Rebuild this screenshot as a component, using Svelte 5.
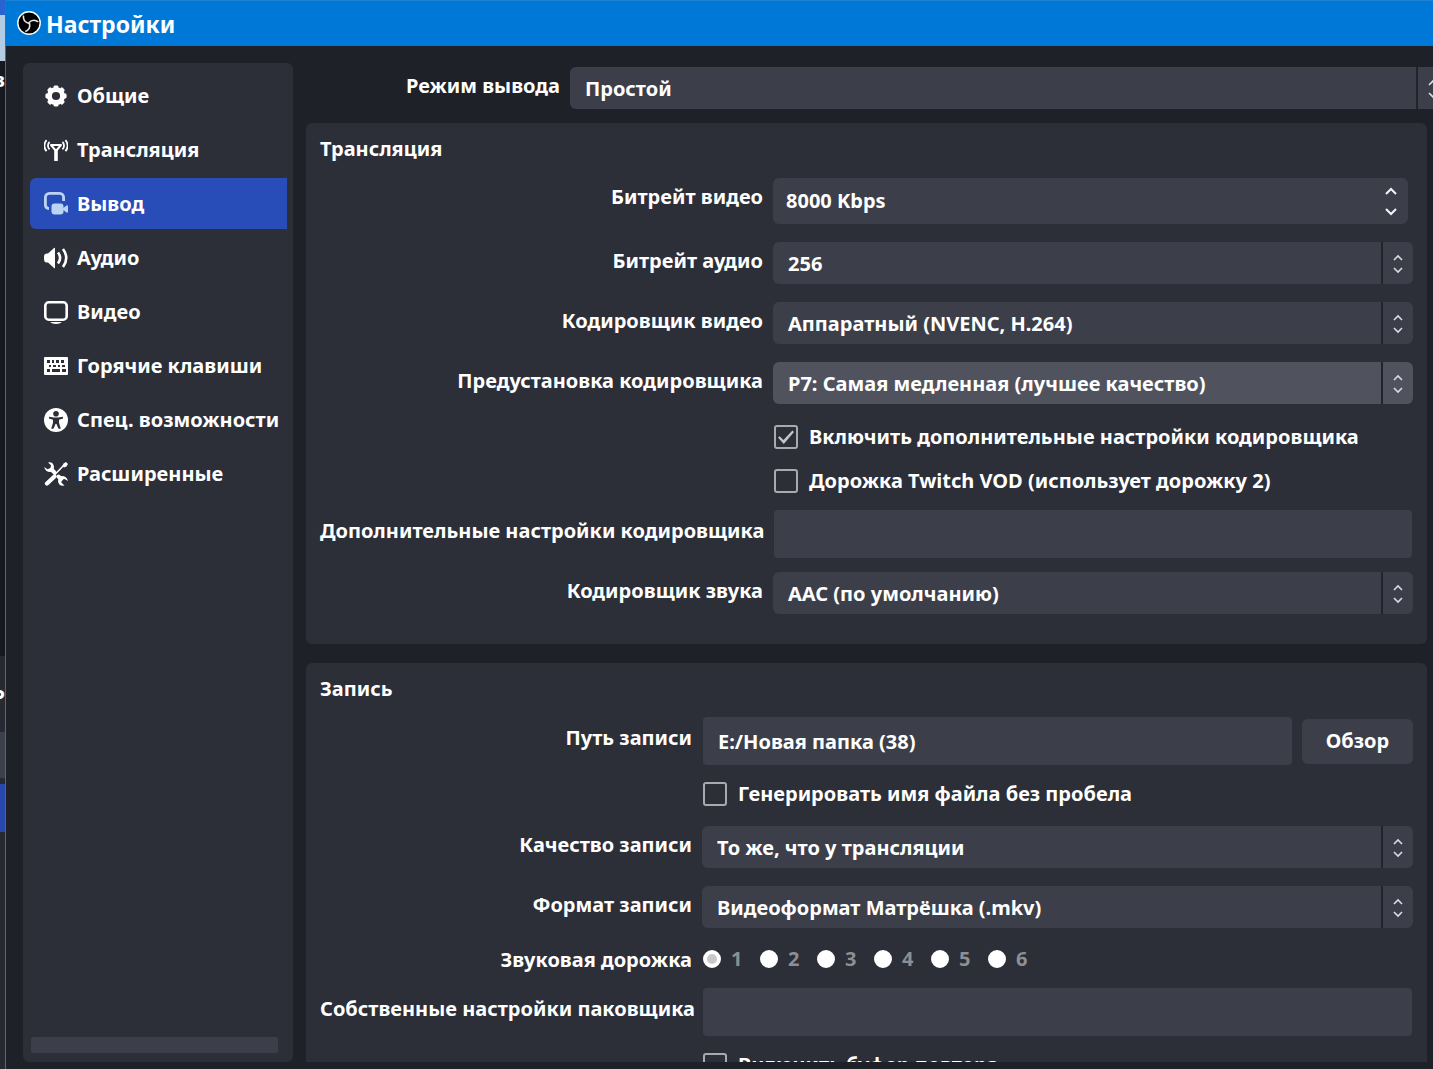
<script>
    const nav = [
        { id: 'general', title: 'Общие' },
        { id: 'stream', title: 'Трансляция' },
        { id: 'output', title: 'Вывод' },
        { id: 'audio', title: 'Аудио' },
        { id: 'video', title: 'Видео' },
        { id: 'hotkeys', title: 'Горячие клавиши' },
        { id: 'accessibility', title: 'Спец. возможности' },
        { id: 'advanced', title: 'Расширенные' },
    ];

    // Eight teeth of the gear, one every 45 degrees
    const teeth = [0, 45, 90, 135, 180, 225, 270, 315];

    let active = $state('output');
    let customEncoder = $state(true);
    let twitchVod = $state(false);
    let noSpace = $state(false);
    let replayBuffer = $state(false);
    let track = $state(1);
    let path = $state('E:/Новая папка (38)');
    let bitrate = $state(8000);
</script>

{#snippet icon(id)}
    <svg class="icon" viewBox="0 0 24 24" aria-hidden="true">
        {#if id === 'general'}
            <circle cx="12" cy="12" r="6.6" fill="none" stroke="currentColor" stroke-width="5" />
            {#each teeth as angle}
                <rect x="9.6" y="1.4" width="4.8" height="4" rx="1.4" fill="currentColor" transform="rotate({angle} 12 12)" />
            {/each}
        {:else if id === 'stream'}
            <g fill="none" stroke="currentColor">
                <path d="M7 7h10l-4.2 5h-1.6z" stroke-width="2" stroke-linejoin="round" />
                <path d="M12 11v12" stroke-width="3.6" />
                <path d="M5.6 4a5 5 0 0 0 0 7.4M18.4 4a5 5 0 0 1 0 7.4" stroke-width="1.8" />
                <path d="M2.6 2.2a8 8 0 0 0 0 11M21.4 2.2a8 8 0 0 1 0 11" stroke-width="1.8" />
            </g>
        {:else if id === 'output'}
            <path d="M5 16.6a4 4 0 0 1-3.6-4V5.4a4 4 0 0 1 4-4h10.2a4 4 0 0 1 4 4V9" fill="none" stroke="currentColor" stroke-width="2.8" />
            <rect x="7.5" y="11.5" width="12" height="11" rx="3" fill="currentColor" />
            <path d="M18 17l4.5-3.6q1.5-.6 1.5 1v5.2q0 1.6-1.5 1z" fill="currentColor" />
        {:else if id === 'audio'}
            <path d="M0 10.5Q0 8 2.5 7.5H4l6-5.5q1-.7 1 .6v18.8q0 1.3-1 .6l-6-5.5H2.5Q0 16 0 13.5z" fill="currentColor" />
            <path d="M14 6.5q4.2 5.5 0 11M19 3q6.5 9 0 18" fill="none" stroke="currentColor" stroke-width="2.6" />
        {:else if id === 'video'}
            <rect x="1.3" y="2.3" width="21.4" height="17.4" rx="3.5" fill="none" stroke="currentColor" stroke-width="2.6" />
            <path d="M6 22h12q-2 2-6 2t-6-2z" fill="currentColor" />
        {:else if id === 'hotkeys'}
            <rect y="3" width="24" height="18" rx="1" fill="currentColor" />
            <path class="hole" d="M3 6h3v3H3zM8 6h2v3H8zM12 6h3v3h-3zM17 6h3v3h-3zM5 11h2v2H5zM9 11h3v2H9zM14 11h2v2h-2zM18 11h3v2h-3zM3 15h3v3H3zM8 15h8v3H8zM18 15h4v3h-4z" />
        {:else if id === 'accessibility'}
            <circle cx="12" cy="12" r="12" fill="currentColor" />
            <circle class="hole" cx="12" cy="5.8" r="2.8" />
            <path class="hole" d="M5 8.8l5 .7h4l5-.7v1.7l-4 1.2v3l1.8 6H14.5L12.5 16h-1l-2 4.7H7.2l1.8-6v-3l-4-1.2z" />
        {:else}
            <g fill="none" stroke="currentColor" stroke-linecap="round">
                <path d="M20.5 2.5L9.5 14" stroke-width="1.6" />
                <path d="M10.5 14.5L3 21.5" stroke-width="4.2" />
                <path d="M7.5 7.5L10.5 10.5M14.5 14.5L17 17" stroke-width="4" />
            </g>
            <path d="M19.5 1.5L22 0l2 2-1.5 2.5-2.5 1-1.5-1.5z" fill="currentColor" />
            <path d="M4 .4Q9-.6 10 4.5L9.5 8 7 10Q1.5 10.5.2 5L3.5 7.2 6.5 6 7 3.2z" fill="currentColor" />
            <path d="M20.5 23.6Q15 24.6 14 19.5L14.5 16 17 14Q22.5 13.5 24 19L20.5 17 17.5 18 17.5 20.8z" fill="currentColor" />
        {/if}
    </svg>
{/snippet}

{#snippet combo(id, value, hot)}
    <div class="combo" class:hot>
        <select {id}>
            <option>{value}</option>
        </select>
        <span class="drop">
            <svg viewBox="0 0 12 20" aria-hidden="true">
                <path d="M2 6l4-4 4 4M2 14l4 4 4-4" />
            </svg>
        </span>
    </div>
{/snippet}

<div class="screen">
    <div class="behind" aria-hidden="true">
        <div class="b-title"></div>
        <div class="b-tab"></div>
        <div class="b-menu">в</div>
        <div class="b-dock">Р</div>
        <div class="b-button"></div>
        <div class="b-button current"></div>
    </div>

    <div class="dialog">
        <header>
            <svg class="logo" viewBox="0 0 24 24" aria-hidden="true">
                <circle cx="12" cy="12" r="11.2" fill="#000" stroke="#fff" stroke-width="1.4" />
                {#each [0, 120, 240] as angle}
                    <path d="M6.5 4.5Q5.5 10.5 12 12.5" transform="rotate({angle} 12 12)" fill="none" stroke="#e8e8e8" stroke-width="1.6" />
                {/each}
            </svg>
            <h1>Настройки</h1>
        </header>

        <div class="body">
            <nav>
                {#each nav as item}
                    <button class:active={active === item.id} onclick={() => (active = item.id)}>
                        {@render icon(item.id)}
                        {item.title}
                    </button>
                {/each}
                <div class="scrollbar"></div>
            </nav>

            <main>
                <div class="mode">
                    <label for="mode">Режим вывода</label>
                    {@render combo('mode', 'Простой')}
                </div>

                <section>
                    <h2>Трансляция</h2>
                    <div class="streaming">
                        <div class="row">
                            <label for="vbitrate">Битрейт видео</label>
                            <div class="spin">
                                <input id="vbitrate" value="{bitrate} Kbps" />
                                <div class="steps">
                                    <button aria-label="Больше" onclick={() => (bitrate += 50)}>
                                        <svg viewBox="0 0 14 8"><path d="M2 7l5-5 5 5" /></svg>
                                    </button>
                                    <button aria-label="Меньше" onclick={() => (bitrate -= 50)}>
                                        <svg viewBox="0 0 14 8"><path d="M2 1l5 5 5-5" /></svg>
                                    </button>
                                </div>
                            </div>
                        </div>
                        <div class="row">
                            <label for="abitrate">Битрейт аудио</label>
                            {@render combo('abitrate', '256')}
                        </div>
                        <div class="row">
                            <label for="vencoder">Кодировщик видео</label>
                            {@render combo('vencoder', 'Аппаратный (NVENC, H.264)')}
                        </div>
                        <div class="row">
                            <label for="preset">Предустановка кодировщика</label>
                            {@render combo('preset', 'P7: Самая медленная (лучшее качество)', true)}
                        </div>
                        <div class="row check-row">
                            <label class="check"><input type="checkbox" bind:checked={customEncoder} />Включить дополнительные настройки кодировщика</label>
                        </div>
                        <div class="row check-row">
                            <label class="check"><input type="checkbox" bind:checked={twitchVod} />Дорожка Twitch VOD (использует дорожку 2)</label>
                        </div>
                        <div class="row text-row">
                            <label for="custom">Дополнительные настройки кодировщика</label>
                            <div class="line">
                                <input class="text" id="custom" type="text" />
                            </div>
                        </div>
                        <div class="row">
                            <label for="aencoder">Кодировщик звука</label>
                            {@render combo('aencoder', 'AAC (по умолчанию)')}
                        </div>
                    </div>
                </section>

                <section>
                    <h2>Запись</h2>
                    <div class="recording">
                        <div class="row text-row">
                            <label for="path">Путь записи</label>
                            <div class="line path">
                                <input class="text" id="path" type="text" bind:value={path} />
                                <button class="browse">Обзор</button>
                            </div>
                        </div>
                        <div class="row check-row">
                            <label class="check"><input type="checkbox" bind:checked={noSpace} />Генерировать имя файла без пробела</label>
                        </div>
                        <div class="row quality-row">
                            <label for="quality">Качество записи</label>
                            {@render combo('quality', 'То же, что у трансляции')}
                        </div>
                        <div class="row">
                            <label for="format">Формат записи</label>
                            {@render combo('format', 'Видеоформат Матрёшка (.mkv)')}
                        </div>
                        <div class="row track-row">
                            <span class="caption" id="tracks">Звуковая дорожка</span>
                            <div class="tracks" role="radiogroup" aria-labelledby="tracks">
                                {#each [1, 2, 3, 4, 5, 6] as n}
                                    <label><input type="radio" name="track" value={n} bind:group={track} />{n}</label>
                                {/each}
                            </div>
                        </div>
                        <div class="row text-row">
                            <label for="muxer">Собственные настройки паковщика</label>
                            <div class="line">
                                <input class="text" id="muxer" type="text" />
                            </div>
                        </div>
                        <div class="row check-row">
                            <label class="check"><input type="checkbox" bind:checked={replayBuffer} />Включить буфер повтора</label>
                        </div>
                    </div>
                </section>
            </main>
        </div>
    </div>
</div>

<style>
    :global(body) {
        margin: 0;
        background: #1e2128;
    }

    * {
        box-sizing: border-box;
    }

    .screen {
        display: flex;
        height: 100vh;
        overflow: hidden;
        font: 700 20px/28px "Noto Sans", "Open Sans", sans-serif;
        color: #fff;
    }

    button,
    input,
    select {
        margin: 0;
        border: 0;
        font: inherit;
        color: inherit;
    }

    /* sliver of the main window left of the dialog */
    .behind {
        display: flex;
        flex-direction: column;
        width: 5px;
        flex: none;
        overflow: hidden;
        background: #272a33;
    }

    .b-title {
        height: 15px;
        background: #2a62d0;
    }

    .b-tab {
        height: 46px;
        background: #b4cbe4;
    }

    .b-menu {
        display: flex;
        justify-content: flex-end;
        height: 595px;
        padding-top: 5px;
        background: #171922;
    }

    .b-dock {
        display: flex;
        justify-content: flex-end;
        height: 76px;
        padding-top: 27px;
    }

    .b-button {
        height: 46px;
        margin-bottom: 6px;
        background: #3c404b;
    }

    .b-button.current {
        height: 48px;
        background: #2848ae;
    }

    .dialog {
        display: flex;
        flex-direction: column;
        flex: 1;
        min-width: 0;
        border-left: 1px solid #1878c4;
        background: #1e2128;
    }

    header {
        display: flex;
        align-items: center;
        gap: 5px;
        height: 46px;
        flex: none;
        padding: 0 11px 1px;
        border-top: 1px solid #1b82d6;
        background: #0078d7;
    }

    .logo {
        width: 24px;
        height: 24px;
    }

    h1 {
        margin: 0;
        padding-top: 2px;
        font-size: 23px;
        line-height: 30px;
    }

    .body {
        display: flex;
        flex: 1;
        min-height: 0;
        gap: 13px;
        padding: 17px 0 7px 17px;
    }

    nav {
        display: flex;
        flex-direction: column;
        gap: 3px;
        width: 270px;
        flex: none;
        padding: 7px 6px 9px 7px;
        border-radius: 6px;
        background: #2c2e38;
    }

    nav button {
        display: flex;
        align-items: center;
        gap: 9px;
        height: 51px;
        padding: 0 0 0 14px;
        border-radius: 6px 0 0 6px;
        background: none;
        white-space: nowrap;
    }

    nav button.active {
        background: #284cb8;
    }

    .icon {
        width: 24px;
        height: 24px;
        flex: none;
    }

    .active .icon {
        color: #bcd4f4;
    }

    .hole {
        fill: #2c2e38;
    }

    .scrollbar {
        height: 16px;
        margin: auto 9px 0 1px;
        border-radius: 2px;
        background: #3c3e49;
    }

    main {
        flex: 1;
        min-width: 0;
        overflow: hidden;
    }

    /* the combo runs past the right edge of the window */
    .mode {
        display: grid;
        grid-template-columns: 254px 1fr;
        gap: 10px;
        margin: 4px -15px 14px 0;
    }

    .mode label,
    .row > label:not(.check),
    .caption {
        padding-top: 5px;
        text-align: right;
        white-space: nowrap;
    }

    section {
        margin: 0 6px 19px 0;
        padding: 12px 14px;
        border-radius: 6px;
        background: #2c2e38;
    }

    h2 {
        margin: 0 0 15px;
        font-size: inherit;
        line-height: 28px;
    }

    .row {
        display: grid;
        gap: 10px;
        margin-bottom: 18px;
    }

    .streaming .row {
        grid-template-columns: 443px 1fr;
    }

    .recording .row {
        grid-template-columns: 372px 1fr;
    }

    .combo {
        position: relative;
        height: 42px;
    }

    select {
        width: 100%;
        height: 42px;
        padding: 2px 44px 0 15px;
        border-radius: 6px;
        appearance: none;
        background: #3c3f4a;
    }

    .hot select {
        background: #50535e;
    }

    .drop {
        position: absolute;
        top: 0;
        right: 0;
        display: grid;
        place-items: center;
        width: 32px;
        height: 42px;
        padding-top: 2px;
        border-left: 2px solid #22242c;
        pointer-events: none;
    }

    .drop svg {
        width: 12px;
        height: 20px;
    }

    .drop path,
    .steps path {
        fill: none;
        stroke: #dcdce0;
        stroke-width: 1.6;
    }

    .steps path {
        stroke: #f4f4f4;
        stroke-width: 2;
    }

    .spin {
        display: flex;
        height: 46px;
        margin-right: 5px;
        border-radius: 6px;
        background: #3c3f4a;
    }

    .spin input {
        flex: 1;
        min-width: 0;
        padding: 0 13px;
        background: none;
    }

    .steps {
        display: flex;
        flex-direction: column;
        padding: 2px 0;
    }

    .steps button {
        display: grid;
        place-items: center;
        width: 34px;
        height: 21px;
        padding: 0;
        background: none;
    }

    .steps svg {
        width: 14px;
        height: 8px;
    }

    .check-row,
    .text-row {
        margin-bottom: 14px;
    }

    .quality-row {
        margin-top: 17px;
    }

    .check {
        grid-column: 2;
        display: flex;
        align-items: center;
        gap: 11px;
        height: 30px;
        white-space: nowrap;
    }

    .check input {
        display: grid;
        place-items: center;
        width: 24px;
        height: 24px;
        margin-left: 1px;
        border: 2px solid #a9aab0;
        border-radius: 3px;
        appearance: none;
    }

    .check input:checked::before {
        content: "";
        width: 16px;
        height: 14px;
        background: #c4c5c9;
        clip-path: polygon(0 54%, 10% 44%, 34% 72%, 90% 4%, 100% 14%, 36% 100%);
    }

    .row.text-row > label {
        padding-top: 7px;
    }

    .line {
        display: flex;
        align-items: center;
        gap: 10px;
        padding: 0 1px;
    }

    .line.path {
        padding-right: 0;
    }

    .text {
        flex: 1;
        min-width: 0;
        height: 48px;
        padding: 0 15px;
        border-radius: 4px;
        background: #3c3f4a;
    }

    .browse {
        width: 111px;
        height: 45px;
        flex: none;
        border-radius: 6px;
        background: #3c3f4a;
    }

    .recording {
        margin-top: -1px;
    }

    .track-row {
        height: 26px;
        margin-bottom: 16px;
    }

    .track-row .caption {
        padding-top: 0;
    }

    .tracks {
        display: flex;
        align-items: center;
        height: 26px;
        padding-left: 1px;
        color: #8e8f92;
    }

    .tracks label {
        display: flex;
        align-items: center;
        gap: 10px;
        width: 57px;
    }

    .tracks input {
        width: 18px;
        height: 18px;
        border: 5px solid #fff;
        border-radius: 9px;
        background: #fff;
        appearance: none;
    }

    .tracks input:checked {
        border-width: 4px;
        background: #c8c8c8;
    }
</style>
